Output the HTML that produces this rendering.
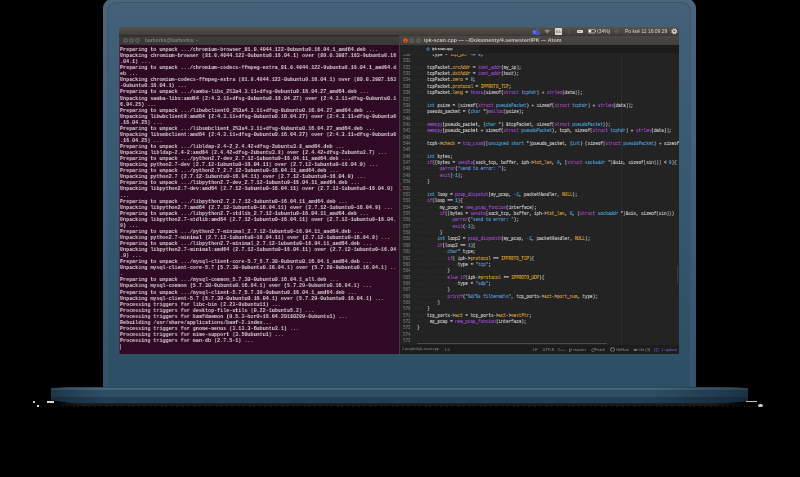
<!DOCTYPE html>
<html><head><meta charset="utf-8">
<style>
*{margin:0;padding:0;box-sizing:border-box}
html,body{width:800px;height:477px;overflow:hidden;background:#000}
body{position:relative;font-family:"Liberation Sans",sans-serif}
.abs{position:absolute}
#lid{left:103px;top:-1px;width:593px;height:388.3px;border-radius:9px 9px 0 0;background:linear-gradient(#4b6579,#41617a 40%,#31546a)}
#lidin{left:4.4px;top:3.3px;right:4.6px;bottom:0;border-radius:9px 9px 0 0;background:linear-gradient(#436178,#3b5b72 30%,#2c4f64);border:1.1px solid #385670;border-bottom:0}
#base{left:51px;top:387.3px;width:697px;height:16px;clip-path:polygon(0 1px,16px 0,681px 0,697px 1px,697px 14px,672px 16px,22px 16px,0 13px);background:linear-gradient(#3a5a70 0,#4a6b80 1.2px,#46667c 2.4px,#2d4d64 3.2px,#2d4d64 9.5px,#223c50 10.3px,#223c50 15.5px,#1e2a33 16px)}
#baseshade{left:51px;top:387.3px;width:697px;height:16px;clip-path:polygon(0 1px,16px 0,681px 0,697px 1px,697px 14px,672px 16px,22px 16px,0 13px);background:linear-gradient(90deg,rgba(0,10,20,.35),rgba(0,0,0,0) 50px,rgba(0,0,0,0) 600px,rgba(0,10,20,.4))}
#shadow{left:51px;top:403.3px;width:697px;height:3.2px;background:linear-gradient(90deg,#000,transparent 30px,transparent 660px,#000),linear-gradient(#1d1e20,#151515)}
#noise{left:40px;top:406.3px;width:720px;height:1.2px;background:repeating-linear-gradient(90deg,rgba(200,200,200,.18) 0 1px,transparent 1px 4px,rgba(200,200,200,.1) 4px 6px,transparent 6px 11px)}
#screen{left:118.6px;top:27px;width:560px;height:327px;background:#300a24;overflow:hidden}
#panel{left:0;top:0;width:560px;height:8px;background:linear-gradient(#56534e,#403e3a)}
#term{left:0;top:8px;width:281px;height:319px;background:#300a24}
#ttitle{left:0;top:0;width:281px;height:10.1px;background:linear-gradient(#2e2d2a 0,#2e2d2a 1.4px,#3e3d39 1.6px,#393834)}
#tbody{left:0;top:10.1px;width:281px;bottom:0;border-left:1.4px solid #5a1d58}
#ttext{left:0.4px;top:1.6px;will-change:transform;transform:scaleX(.8173);transform-origin:0 0;font-family:"Liberation Mono",monospace;font-weight:bold;font-size:6.2px;line-height:6.06px;color:#d6d0d3;white-space:pre}
.dot{position:absolute;width:5px;height:5px;border-radius:50%;background:#4a4945;border:.9px solid #64625c}
#atom{left:281px;top:8px;width:279px;height:319px;background:#232323;box-shadow:-.8px 0 0 #484848}
#atitle{left:0;top:0;width:279px;height:9.5px;background:linear-gradient(#4a4844,#42403c);border-top:1px solid #3a3935}
#tabs{left:0;top:9.5px;width:279px;height:8.3px;background:#1c1c1c}
#tab{left:0;top:0;width:79px;height:8.3px;background:#232323}
#editor{left:0;top:17.8px;width:279px;height:291.8px;background:#232323;overflow:hidden}
#gutter{left:3.4px;top:0;will-change:transform;transform:scaleX(.786);transform-origin:0 0;width:9.55px;font-family:"Liberation Mono",monospace;font-size:5.3px;line-height:6.36px;color:#707070;white-space:pre;text-align:right;-webkit-text-stroke-width:.14px}
#code{left:17.2px;top:0;will-change:transform;transform:scaleX(.8673);transform-origin:0 0;font-family:"Liberation Mono",monospace;font-size:4.9px;line-height:6.36px;color:#c8c8c8;white-space:pre;-webkit-text-stroke-width:.14px}
#guide{left:221.5px;top:0;width:.7px;height:292px;background:#2e2e2e}
#status{left:0;top:310px;width:279px;height:9.5px;background:#1c1c1c;font-size:4.1px;color:#8d8d8d;white-space:pre;will-change:transform}
.st{position:absolute;top:2.4px;line-height:5px}
#hscroll{left:17px;top:289.9px;width:190px;height:1.1px;background:#4a4a4a;border-radius:1px}
.pt{position:absolute;top:2px;font-size:4.95px;line-height:6px;color:#d9d5ce;white-space:pre;will-change:transform}
i{font-style:normal}.w{color:#3c3c3c;-webkit-text-stroke-width:0}
.k{color:#b044c4}.f{color:#9c4cd0}.p{color:#d99a3a}.t{color:#4a9ed8}.n{color:#4aa8e8}.s{color:#5a9ae8}.c{color:#e0a030}
</style></head><body>
<div id="lid" class="abs"><div id="lidin" class="abs"></div></div>
<div id="base" class="abs"></div>
<div id="baseshade" class="abs"></div>
<div id="shadow" class="abs"></div>
<div id="noise" class="abs"></div>
<div class="abs" style="left:47px;top:401px;width:7px;height:2px;background:#d8d8d8"></div>
<div class="abs" style="left:33px;top:400.5px;width:2px;height:2px;background:#bbb"></div>
<div class="abs" style="left:37px;top:405px;width:2px;height:2px;background:#ddd"></div>
<div class="abs" style="left:746px;top:401px;width:11px;height:1.3px;background:#bbb"></div>
<div class="abs" style="left:758px;top:403.5px;width:5px;height:3.5px;background:#ccc;border-radius:50%"></div>
<div id="screen" class="abs">
  <div id="panel" class="abs">
    <svg class="abs" style="left:413.6px;top:1px" width="8.6" height="7.6" viewBox="0 0 86 76"><circle cx="50" cy="16" r="12" fill="#4f52c8"/><rect x="30" y="26" width="50" height="46" rx="12" fill="#4a4dc4"/><rect x="4" y="22" width="40" height="40" rx="6" fill="#5558d4"/><path d="M14 34h20M24 34v20" stroke="#9a9ce0" stroke-width="6"/></svg>
    <svg class="abs" style="left:425.4px;top:1.8px" width="6.5" height="5" viewBox="0 0 65 50"><path d="M4 14Q32 -6 61 14L32 46z" fill="#8a8782"/></svg>
    <div class="abs" style="left:436.2px;top:1px;width:7px;height:6.6px;background:#d9d6d0;border-radius:.6px"><div class="abs" style="left:1.3px;top:1.5px;font-size:7px;line-height:8px;font-weight:bold;color:#6f6c66;transform:scale(.5);transform-origin:0 0;white-space:pre;will-change:transform">EA</div></div>
    <svg class="abs" style="left:448.6px;top:1.6px" width="3" height="5.4" viewBox="0 0 30 54"><path d="M4 14L24 38 14 48V6l10 10L4 40" stroke="#5e5c57" stroke-width="5" fill="none"/></svg>
    <div class="abs" style="left:458.2px;top:2.6px;width:6.3px;height:3.5px;background:#dcd9d3;border-radius:1px"><div class="abs" style="left:1.6px;top:1.2px;width:3.1px;height:1px;background:#a29f9a"></div></div>
    <svg class="abs" style="left:469px;top:2.3px" width="8.4" height="4.4" viewBox="0 0 84 44"><rect x="4" y="4" width="68" height="36" rx="6" fill="#4a4844" stroke="#d8d5cf" stroke-width="7"/><rect x="10" y="10" width="22" height="24" fill="#ece9e3"/><rect x="74" y="14" width="8" height="16" fill="#d8d5cf"/></svg>
    
    <div class="pt" style="left:478.4px">(34%)</div>
    <div class="pt" style="left:495.3px;color:#8e8b85">◁·</div>
    <div class="pt" style="left:506.9px">Po kvě 11 16:09:29</div>
    <svg class="abs" style="left:552.6px;top:1.0px" width="6.6" height="6.6" viewBox="0 0 66 66"><g fill="#d6d3cd"><circle cx="33" cy="33" r="23"/><circle cx="55.2" cy="42.2" r="6.5"/><circle cx="42.2" cy="55.2" r="6.5"/><circle cx="23.8" cy="55.2" r="6.5"/><circle cx="10.8" cy="42.2" r="6.5"/><circle cx="10.8" cy="23.8" r="6.5"/><circle cx="23.8" cy="10.8" r="6.5"/><circle cx="42.2" cy="10.8" r="6.5"/><circle cx="55.2" cy="23.8" r="6.5"/></g><path d="M17 26h32L33 44z" fill="#4a4844"/></svg>
  </div>
  <div id="term" class="abs">
    <div id="ttitle" class="abs">
      <div class="dot" style="left:4.1px;top:2.9px"></div>
      <div class="dot" style="left:10.5px;top:2.9px"></div>
      <div class="dot" style="left:16.9px;top:2.9px"></div>
      <div class="abs" style="left:26.3px;top:2.4px;font-size:5.0px;font-weight:bold;color:#7e7c76;will-change:transform;white-space:pre">barborka@barborka: ~</div>
    </div>
    <div id="tbody" class="abs"><div id="ttext" class="abs">Preparing to unpack .../chromium-browser_81.0.4044.122-0ubuntu0.16.04.1_amd64.deb ...
Unpacking chromium-browser (81.0.4044.122-0ubuntu0.16.04.1) over (80.0.3987.163-0ubuntu0.16
.04.1) ...
Preparing to unpack .../chromium-codecs-ffmpeg-extra_81.0.4044.122-0ubuntu0.16.04.1_amd64.d
eb ...
Unpacking chromium-codecs-ffmpeg-extra (81.0.4044.122-0ubuntu0.16.04.1) over (80.0.3987.163
-0ubuntu0.16.04.1) ...
Preparing to unpack .../samba-libs_2%3a4.3.11+dfsg-0ubuntu0.16.04.27_amd64.deb ...
Unpacking samba-libs:amd64 (2:4.3.11+dfsg-0ubuntu0.16.04.27) over (2:4.3.11+dfsg-0ubuntu0.1
6.04.25) ...
Preparing to unpack .../libwbclient0_2%3a4.3.11+dfsg-0ubuntu0.16.04.27_amd64.deb ...
Unpacking libwbclient0:amd64 (2:4.3.11+dfsg-0ubuntu0.16.04.27) over (2:4.3.11+dfsg-0ubuntu0
.16.04.25) ...
Preparing to unpack .../libsmbclient_2%3a4.3.11+dfsg-0ubuntu0.16.04.27_amd64.deb ...
Unpacking libsmbclient:amd64 (2:4.3.11+dfsg-0ubuntu0.16.04.27) over (2:4.3.11+dfsg-0ubuntu0
.16.04.25) ...
Preparing to unpack .../libldap-2.4-2_2.4.42+dfsg-2ubuntu3.8_amd64.deb ...
Unpacking libldap-2.4-2:amd64 (2.4.42+dfsg-2ubuntu3.8) over (2.4.42+dfsg-2ubuntu3.7) ...
Preparing to unpack .../python2.7-dev_2.7.12-1ubuntu0~16.04.11_amd64.deb ...
Unpacking python2.7-dev (2.7.12-1ubuntu0~16.04.11) over (2.7.12-1ubuntu0~16.04.9) ...
Preparing to unpack .../python2.7_2.7.12-1ubuntu0~16.04.11_amd64.deb ...
Unpacking python2.7 (2.7.12-1ubuntu0~16.04.11) over (2.7.12-1ubuntu0~16.04.9) ...
Preparing to unpack .../libpython2.7-dev_2.7.12-1ubuntu0~16.04.11_amd64.deb ...
Unpacking libpython2.7-dev:amd64 (2.7.12-1ubuntu0~16.04.11) over (2.7.12-1ubuntu0~16.04.9)
...
Preparing to unpack .../libpython2.7_2.7.12-1ubuntu0~16.04.11_amd64.deb ...
Unpacking libpython2.7:amd64 (2.7.12-1ubuntu0~16.04.11) over (2.7.12-1ubuntu0~16.04.9) ...
Preparing to unpack .../libpython2.7-stdlib_2.7.12-1ubuntu0~16.04.11_amd64.deb ...
Unpacking libpython2.7-stdlib:amd64 (2.7.12-1ubuntu0~16.04.11) over (2.7.12-1ubuntu0~16.04.
9) ...
Preparing to unpack .../python2.7-minimal_2.7.12-1ubuntu0~16.04.11_amd64.deb ...
Unpacking python2.7-minimal (2.7.12-1ubuntu0~16.04.11) over (2.7.12-1ubuntu0~16.04.9) ...
Preparing to unpack .../libpython2.7-minimal_2.7.12-1ubuntu0~16.04.11_amd64.deb ...
Unpacking libpython2.7-minimal:amd64 (2.7.12-1ubuntu0~16.04.11) over (2.7.12-1ubuntu0~16.04
.9) ...
Preparing to unpack .../mysql-client-core-5.7_5.7.30-0ubuntu0.16.04.1_amd64.deb ...
Unpacking mysql-client-core-5.7 (5.7.30-0ubuntu0.16.04.1) over (5.7.29-0ubuntu0.16.04.1) ..
.
Preparing to unpack .../mysql-common_5.7.30-0ubuntu0.16.04.1_all.deb ...
Unpacking mysql-common (5.7.30-0ubuntu0.16.04.1) over (5.7.29-0ubuntu0.16.04.1) ...
Preparing to unpack .../mysql-client-5.7_5.7.30-0ubuntu0.16.04.1_amd64.deb ...
Unpacking mysql-client-5.7 (5.7.30-0ubuntu0.16.04.1) over (5.7.29-0ubuntu0.16.04.1) ...
Processing triggers for libc-bin (2.23-0ubuntu11) ...
Processing triggers for desktop-file-utils (0.22-1ubuntu5.2) ...
Processing triggers for bamfdaemon (0.5.3~bzr0+16.04.20180209-0ubuntu1) ...
Rebuilding /usr/share/applications/bamf-2.index...
Processing triggers for gnome-menus (3.13.3-6ubuntu3.1) ...
Processing triggers for mime-support (3.59ubuntu1) ...
Processing triggers for man-db (2.7.5-1) ...
<span style="display:inline-block;width:.6px;height:5.5px;background:#8d7f8a;vertical-align:-1px"></span></div></div>
  </div>
  <div id="atom" class="abs">
    <div id="atitle" class="abs">
      <div class="abs" style="left:3.2px;top:1.9px;width:5.2px;height:5.2px;border-radius:50%;background:#e4592c;border:.6px solid #d24c22"><div class="abs" style="left:1.3px;top:1.3px;width:1.4px;height:1.4px;background:#9a3a1c;border-radius:50%"></div></div>
      <div class="abs" style="left:9.6px;top:1.9px;width:5.2px;height:5.2px;border-radius:50%;background:#54524d;border:.8px solid #64625d"></div>
      <div class="abs" style="left:16px;top:1.9px;width:5.2px;height:5.2px;border-radius:50%;background:#54524d;border:.8px solid #64625d"></div>
      <div class="abs" style="left:24.7px;top:1.1px;font-size:5.3px;font-weight:bold;color:#c9c5bd;letter-spacing:.05px;transform:scaleY(.9);transform-origin:0 50%;white-space:pre;will-change:transform">ipk-scan.cpp — ~/Dokumenty/4.semester/IPK — Atom</div>
    </div>
    <div id="tabs" class="abs"><div id="tab" class="abs">
      <svg class="abs" style="left:26.2px;top:2.2px" width="4.2" height="4.2" viewBox="0 0 42 42"><circle cx="21" cy="21" r="16" stroke="#4f7a98" stroke-width="6" fill="none"/><path d="M26 15A8 8 0 1 0 26 27" stroke="#8ab0c8" stroke-width="5" fill="none"/></svg>
      <div class="abs" style="left:32.2px;top:2.3px;font-size:7.3px;line-height:8px;color:#d4d4d4;transform:scale(.5);transform-origin:0 0;text-rendering:geometricPrecision;-webkit-text-stroke:.25px #d4d4d4;white-space:pre;will-change:transform">ipk-scan.cpp</div>
    </div></div>
    <div id="editor" class="abs">
      <div id="guide" class="abs"></div>
      <div id="hscroll" class="abs"></div>
      <div class="abs" style="left:277px;top:213.5px;width:1.6px;height:17px;background:#3c3c3c;border-radius:1px"></div>
      <div class="abs" style="left:0;top:130px;width:0;height:0;border-left:1.6px solid #c03030;border-top:1.2px solid transparent;border-bottom:1.2px solid transparent"></div>
      <div class="abs" style="left:0;top:135.8px;width:0;height:0;border-left:1.6px solid #c03030;border-top:1.2px solid transparent;border-bottom:1.2px solid transparent"></div>
      <div id="gutter" class="abs" style="top:-0.8px">530
531
532
533
534
535
536
537
538
539
540
541
542
543
544
545
546
547
548
549
550
551
552
553
554
555
556
557
558
559
560
561
562
563
564
565
566
567
568
569
570
571
572
573
574
575</div>
      <div id="code" class="abs" style="top:-0.6px"><i class="w">······</i>type = <i class="p">tcp_ptr</i> -&gt; <i class="n">0</i>;

<i class="w">····</i>tcpPacket.<i class="p">srcAddr</i> = <i class="f">inet_addr</i>(my_ip);
<i class="w">····</i>tcpPacket.<i class="p">dstAddr</i> = <i class="f">inet_addr</i>(host);
<i class="w">····</i>tcpPacket.<i class="p">zero</i> = <i class="n">0</i>;
<i class="w">····</i>tcpPacket.<i class="p">protocol</i> = <i class="c">IPPROTO_TCP</i>;
<i class="w">····</i>tcpPacket.<i class="p">leng</i> = <i class="f">htons</i>(sizeof(<i class="k">struct</i> <i class="t">tcphdr</i>) + <i class="f">strlen</i>(data));

<i class="w">····</i><i class="t">int</i> psize = (sizeof(<i class="k">struct</i> <i class="t">pseudoPacket</i>) + sizeof(<i class="k">struct</i> <i class="t">tcphdr</i>) + <i class="f">strlen</i>(data));
<i class="w">····</i>pseudo_packet = (<i class="t">char</i> *)<i class="f">malloc</i>(psize);

<i class="w">····</i><i class="f">memcpy</i>(pseudo_packet, (<i class="t">char</i> *) &amp;tcpPacket, sizeof(<i class="k">struct</i> <i class="t">pseudoPacket</i>));
<i class="w">····</i><i class="f">memcpy</i>(pseudo_packet + sizeof(<i class="k">struct</i> <i class="t">pseudoPacket</i>), tcph, sizeof(<i class="k">struct</i> <i class="t">tcphdr</i>) + <i class="f">strlen</i>(data));

<i class="w">····</i>tcph-&gt;<i class="p">check</i> = <i class="f">tcp_csum</i>((<i class="t">unsigned short</i> *)pseudo_packet, (<i class="t">int</i>) (sizeof(<i class="k">struct</i> <i class="t">pseudoPacket</i>) + sizeof(struct tcphdr)));

<i class="w">····</i><i class="t">int</i> bytes;
<i class="w">····</i><i class="k">if</i>((bytes = <i class="f">sendto</i>(sock_tcp, buffer, iph-&gt;<i class="p">tot_len</i>, <i class="n">0</i>, (<i class="k">struct</i> <i class="t">sockaddr</i> *)&amp;sin, sizeof(sin))) &lt; <i class="n">0</i>){
<i class="w">·········</i><i class="f">perror</i>(<i class="s">&quot;send to error: &quot;</i>);
<i class="w">·········</i><i class="f">exit</i>(<i class="n">-1</i>);
<i class="w">····</i>}

<i class="w">····</i><i class="t">int</i> loop = <i class="f">pcap_dispatch</i>(my_pcap, <i class="n">-1</i>, packetHandler, <i class="c">NULL</i>);
<i class="w">····</i><i class="k">if</i>(loop == <i class="n">1</i>){
<i class="w">·········</i>my_pcap = <i class="f">new_pcap_funcion</i>(interface);
<i class="w">·········</i><i class="k">if</i>((bytes = <i class="f">sendto</i>(sock_tcp, buffer, iph-&gt;<i class="p">tot_len</i>, <i class="n">0</i>, (<i class="k">struct</i> <i class="t">sockaddr</i> *)&amp;sin, sizeof(sin)))
<i class="w">··············</i><i class="f">perror</i>(<i class="s">&quot;send to error: &quot;</i>);
<i class="w">··············</i><i class="f">exit</i>(<i class="n">-1</i>);
<i class="w">·········</i>}
<i class="w">········</i><i class="t">int</i> loop2 = <i class="f">pcap_dispatch</i>(my_pcap, <i class="n">-1</i>, packetHandler, <i class="c">NULL</i>);
<i class="w">········</i><i class="k">if</i>(loop2 == <i class="n">1</i>){
<i class="w">············</i><i class="t">char</i>* type;
<i class="w">············</i><i class="k">if</i>( iph-&gt;<i class="p">protocol</i> == <i class="c">IPPROTO_TCP</i>){
<i class="w">················</i>type = <i class="s">&quot;tcp&quot;</i>;
<i class="w">············</i>}
<i class="w">············</i><i class="k">else</i> <i class="k">if</i>(iph-&gt;<i class="p">protocol</i> == <i class="c">IPPROTO_UDP</i>){
<i class="w">················</i>type = <i class="s">&quot;udp&quot;</i>;
<i class="w">············</i>}
<i class="w">············</i><i class="f">printf</i>(<i class="s">&quot;%d/%s filtered\n&quot;</i>, tcp_ports-&gt;<i class="p">act</i>-&gt;<i class="p">port_num</i>, type);
<i class="w">········</i>}
<i class="w">····</i>}
<i class="w">····</i>tcp_ports-&gt;<i class="p">act</i> = tcp_ports-&gt;<i class="p">act</i>-&gt;<i class="p">nextPtr</i>;
<i class="w">·····</i>my_pcap = <i class="f">new_pcap_funcion</i>(interface);
}

</div>
      <div class="abs" style="left:0;top:0;width:279px;height:1.6px;background:#232323"></div>
    </div>
    <div id="status" class="abs">
      <span class="st" style="left:2px;font-size:3.8px">2.projekt/ipk-scan.cpp</span>
      <span class="st" style="left:44.4px">1:1</span>
      <span class="st" style="left:133px">LF</span>
      <span class="st" style="left:142.5px">UTF-8</span>
      <span class="st" style="left:157.5px">C++</span>
      <svg class="abs" style="left:169px;top:2.6px" width="3.4" height="4.4" viewBox="0 0 34 44"><path d="M6 4v36M6 40L28 10M28 4v10" stroke="#8d8d8d" stroke-width="6" fill="none"/></svg>
      <span class="st" style="left:173.5px">master</span>
      <svg class="abs" style="left:190.5px;top:2.6px" width="4" height="4.4" viewBox="0 0 40 44"><path d="M32 14A14 14 0 1 0 34 26" stroke="#8d8d8d" stroke-width="6" fill="none"/><path d="M24 4h14v14z" fill="#8d8d8d"/></svg>
      <span class="st" style="left:195px">Fetch</span>
      <svg class="abs" style="left:210px;top:2.4px" width="5" height="5" viewBox="0 0 50 50"><circle cx="25" cy="25" r="19" stroke="#9a9a9a" stroke-width="8" fill="none"/><path d="M18 46v-12h14v12" fill="#1c1c1c"/></svg>
      <span class="st" style="left:216px">GitHub</span>
      <svg class="abs" style="left:233px;top:3px" width="5" height="3.6" viewBox="0 0 50 36"><path d="M2 18h46" stroke="#9a9a9a" stroke-width="6"/><path d="M25 4L39 18 25 32 11 18z" fill="#9a9a9a"/><circle cx="25" cy="18" r="5" fill="#1c1c1c"/></svg>
      <span class="st" style="left:239px">Git (3)</span>
      <svg class="abs" style="left:254px;top:2.6px" width="5.4" height="4.6" viewBox="0 0 54 46"><rect x="3" y="3" width="48" height="40" rx="4" stroke="#5a56d0" stroke-width="6" fill="none"/><path d="M27 5v36" stroke="#5a56d0" stroke-width="5"/></svg>
      <span class="st" style="left:261px;color:#6a64e0">1 update</span>
    </div>
  </div>
</div>
</body></html>
